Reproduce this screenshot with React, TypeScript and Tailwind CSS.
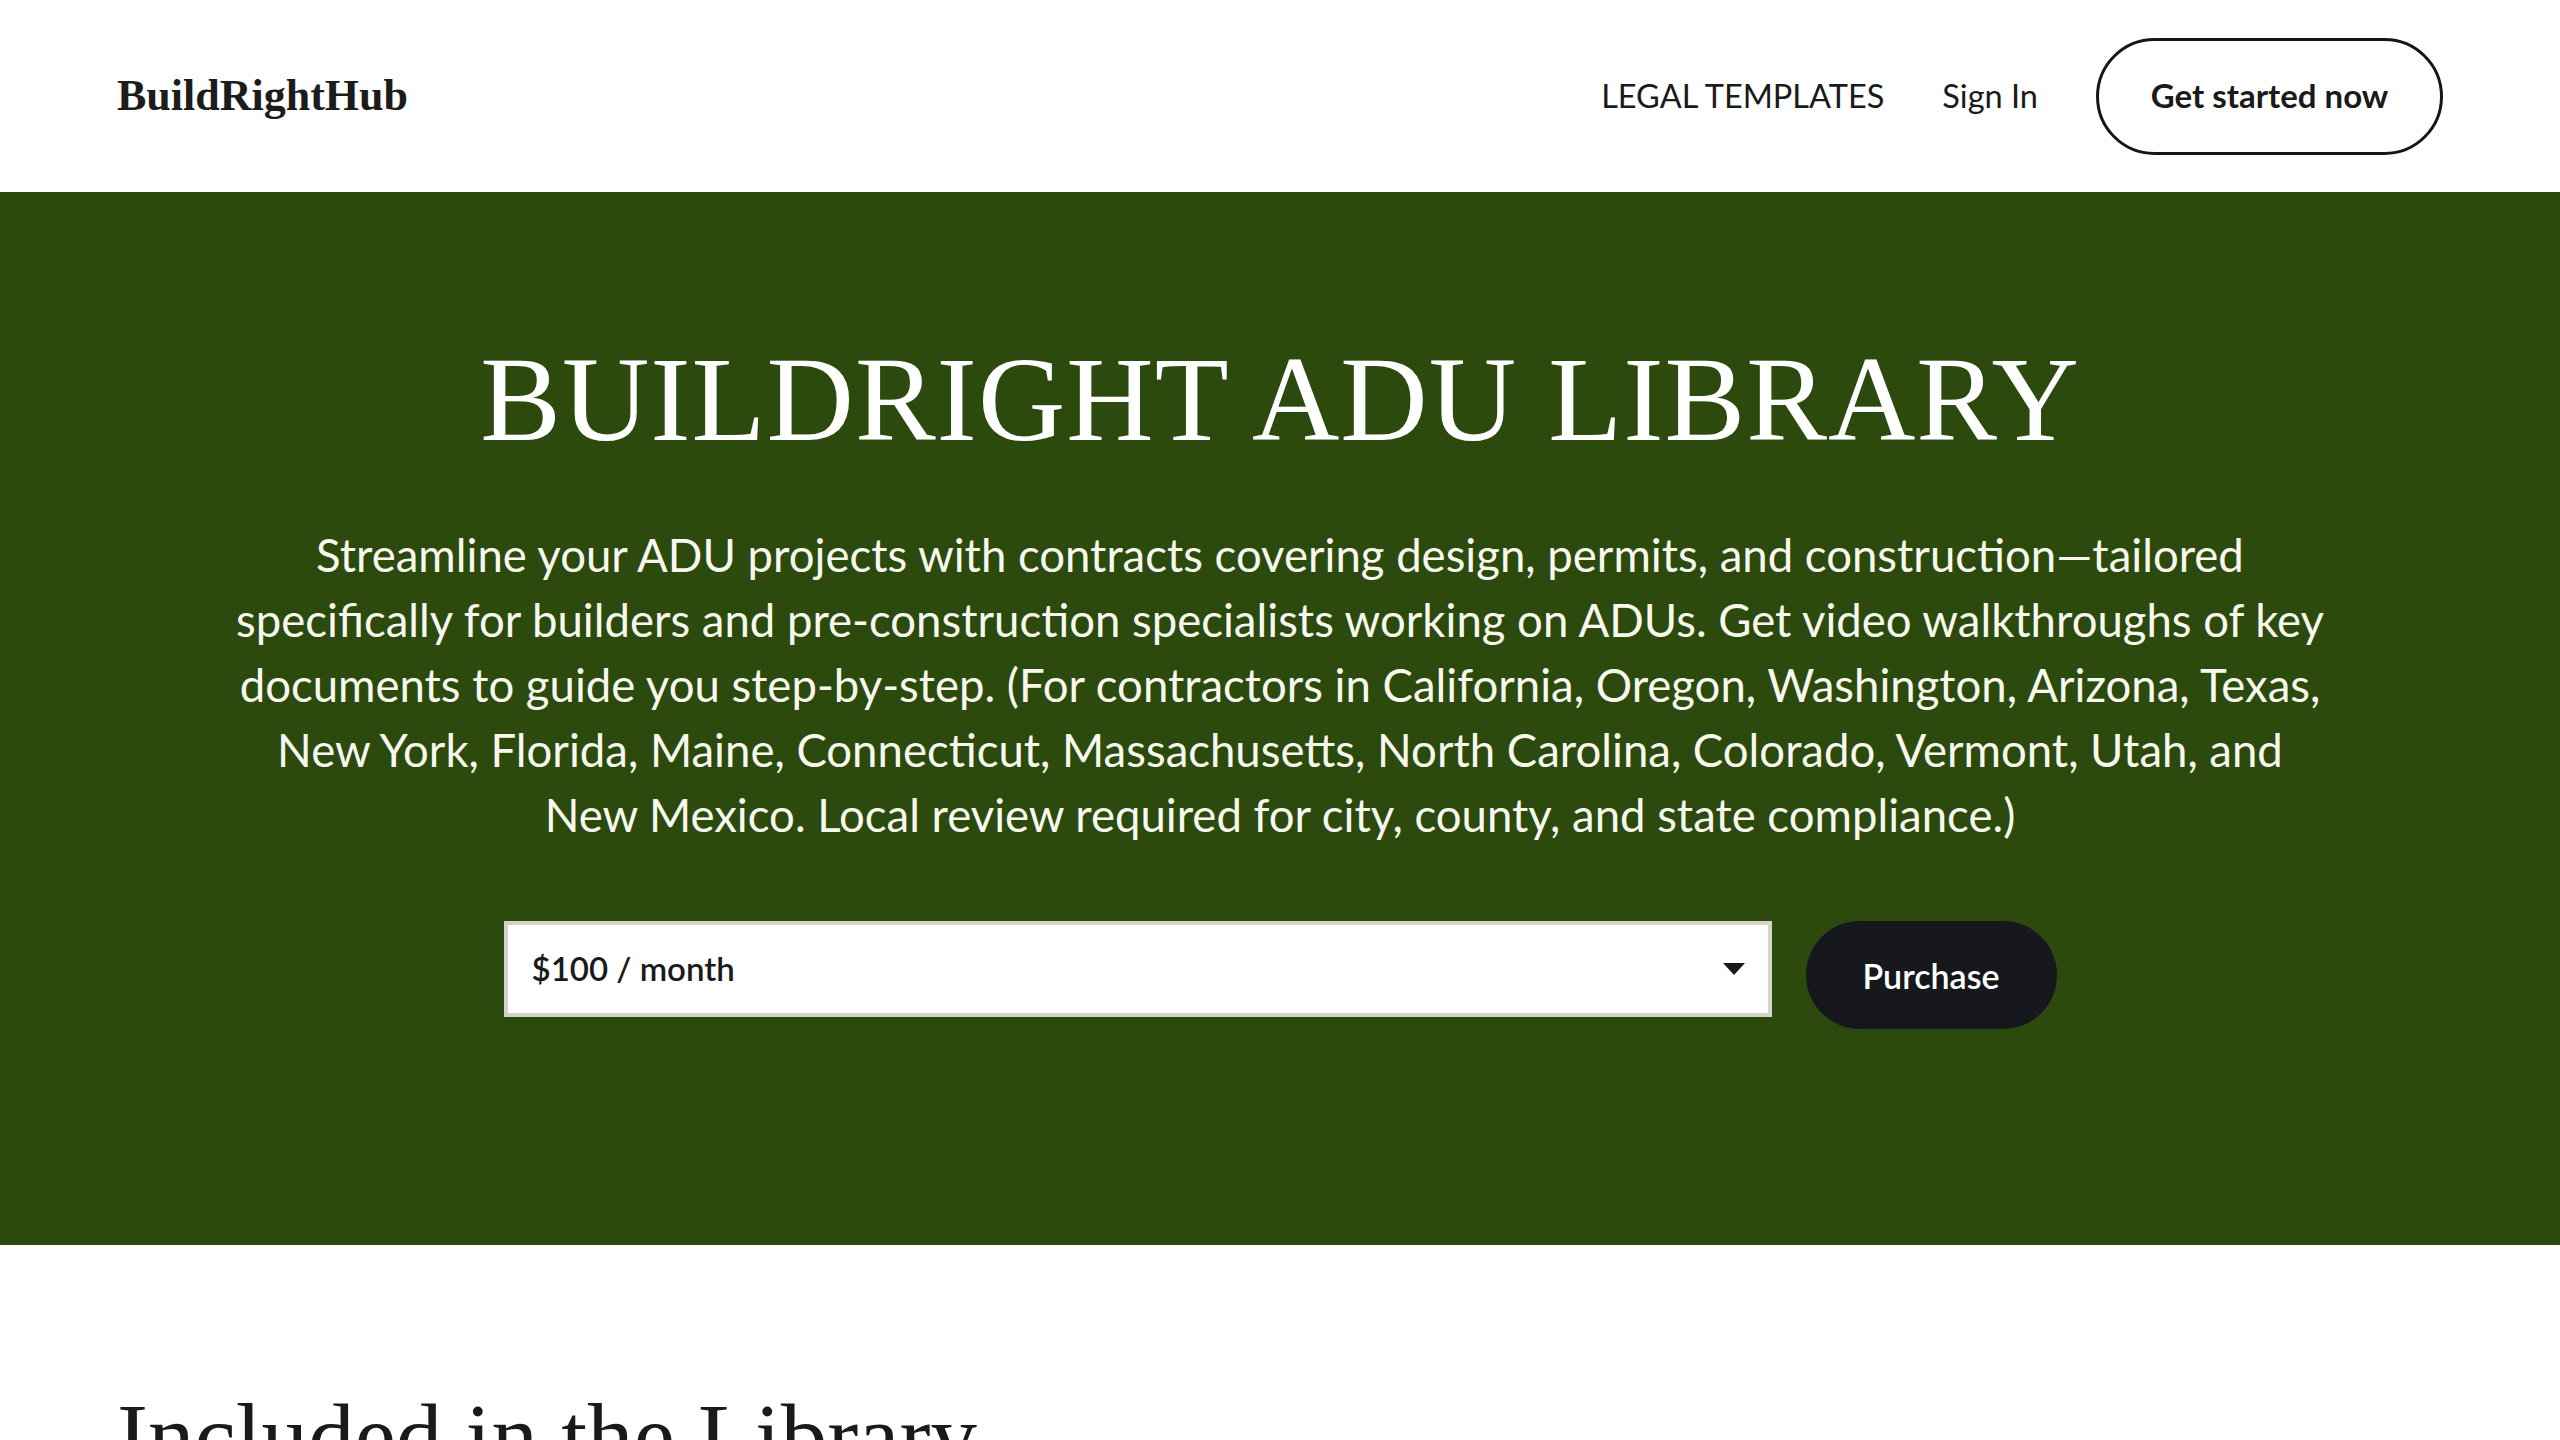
import React from "react";

const serif = "font-['Liberation_Serif','Times_New_Roman',serif]";
const sans = "font-['Lato','Noto_Sans',sans-serif]";

const heroLines = [
  "Streamline your ADU projects with contracts covering design, permits, and construction\u2014tailored",
  "specifically for builders and pre-construction specialists working on ADUs. Get video walkthroughs of key",
  "documents to guide you step-by-step. (For contractors in California, Oregon, Washington, Arizona, Texas,",
  "New York, Florida, Maine, Connecticut, Massachusetts, North Carolina, Colorado, Vermont, Utah, and",
  "New Mexico. Local review required for city, county, and state compliance.)",
];

function Header() {
  return (
    <header className="h-[192px] bg-white px-[117px] flex items-center justify-between">
      <a href="#" className={`${serif} text-[44px] font-bold text-[#1c1c1c] leading-none`}>
        BuildRightHub
      </a>
      <nav className={`${sans} flex items-center gap-[58px] text-[32.5px] text-[#1a1a1a]`}>
        <a href="#">LEGAL TEMPLATES</a>
        <a href="#">Sign In</a>
        <a
          href="#"
          className="w-[347px] h-[117px] rounded-full border-[3px] border-[#161616] flex items-center justify-center font-bold text-[33px]"
        >
          Get started now
        </a>
      </nav>
    </header>
  );
}

function Hero() {
  return (
    <section className="bg-[#2c4a0d] pt-[147px] pb-[216px] flex flex-col items-center">
      <h1 className={`${serif} text-[121px] tracking-[1px] leading-none text-white`}>BUILDRIGHT ADU LIBRARY</h1>
      <p className={`${sans} mt-[62px] text-[45.5px] leading-[65px] text-[#f8f8ef] text-center`}>
        {heroLines.map((line, i) => (
          <span key={i} className="block whitespace-nowrap">
            {line}
          </span>
        ))}
      </p>
      <div className="mt-[74px] flex items-start gap-[34px]">
        <div
          className={`${sans} w-[1268px] h-[96px] bg-white border-4 border-[#d5d2ca] flex items-center justify-between pl-[24px] pr-[23px] text-[33px] font-semibold text-[#1a1a1a]`}
        >
          <span>$100 / month</span>
          <svg width="22" height="12" viewBox="0 0 22 12">
            <path d="M0 0 H22 L11 12 Z" fill="#1a1a1a" />
          </svg>
        </div>
        <button
          className={`${sans} w-[251px] h-[108px] rounded-full bg-[#16181d] text-white text-[34px] font-semibold`}
        >
          Purchase
        </button>
      </div>
    </section>
  );
}

export default function App() {
  return (
    <div className="min-h-screen bg-white">
      <Header />
      <Hero />
      <section className="px-[117px] pt-[145px] pb-[120px]">
        <h2 className={`${serif} text-[93px] leading-none text-[#1a1a1a]`}>Included in the Library</h2>
      </section>
    </div>
  );
}
